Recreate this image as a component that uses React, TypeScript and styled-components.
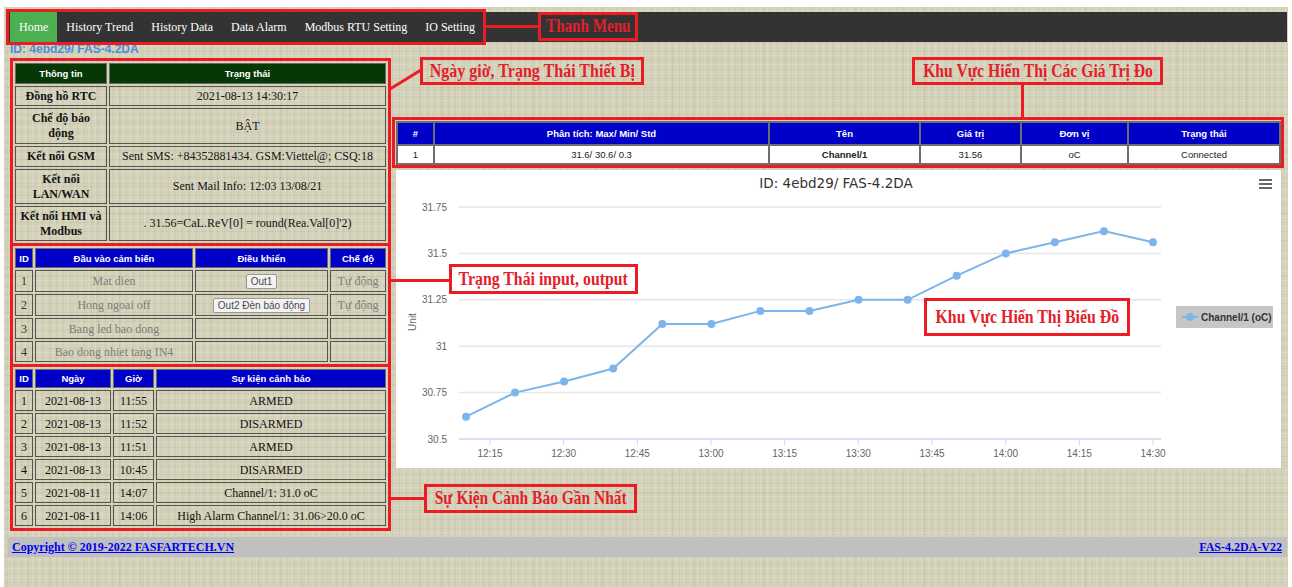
import React from 'react'
import styled, { createGlobalStyle, css } from 'styled-components'

const RED = '#ec1c24'

const GlobalStyle = createGlobalStyle`
  html, body {
    margin: 0;
    padding: 0;
    background: #fff;
  }
  body {
    font-family: "Liberation Serif", "Times New Roman", serif;
  }
`

const INFO_ROWS: [string, string, number][] = [
  ['Đồng hồ RTC', '2021-08-13 14:30:17', 20],
  ['Chế độ báo động', 'BẬT', 36],
  ['Kết nối GSM', 'Sent SMS: +84352881434. GSM:Viettel@; CSQ:18', 21],
  ['Kết nối LAN/WAN', 'Sent Mail Info: 12:03 13/08/21', 35],
  ['Kết nối HMI và Modbus', ". 31.56=CaL.ReV[0] = round(Rea.Val[0]'2)", 35],
]

const IO_ROWS = [
  { id: 1, name: 'Mat dien', out: 'Out1', mode: 'Tự động', h: 22 },
  { id: 2, name: 'Hong ngoai off', out: 'Out2 Đèn báo động', mode: 'Tự động', h: 22 },
  { id: 3, name: 'Bang led bao dong', h: 21 },
  { id: 4, name: 'Bao dong nhiet tang IN4', h: 21 },
]

const EVENTS = [
  ['2021-08-13', '11:55', 'ARMED'],
  ['2021-08-13', '11:52', 'DISARMED'],
  ['2021-08-13', '11:51', 'ARMED'],
  ['2021-08-13', '10:45', 'DISARMED'],
  ['2021-08-11', '14:07', 'Channel/1: 31.0 oC'],
  ['2021-08-11', '14:06', 'High Alarm Channel/1: 31.06>20.0 oC'],
]

const MENU = ['Home', 'History Trend', 'History Data', 'Data Alarm', 'Modbus RTU Setting', 'IO Setting']

const SERIES = [30.62, 30.75, 30.81, 30.88, 31.12, 31.12, 31.19, 31.19, 31.25, 31.25, 31.38, 31.5, 31.56, 31.62, 31.56]
const Y_TICKS = [31.75, 31.5, 31.25, 31, 30.75, 30.5]
const X_TICKS = ['12:15', '12:30', '12:45', '13:00', '13:15', '13:30', '13:45', '14:00', '14:15', '14:30']

const PLOT = { left: 63, right: 765, top: 37, bottom: 269 }
const yOf = (v: number) => PLOT.bottom - (v - 30.5) * ((PLOT.bottom - PLOT.top) / 1.25)
const xOf = (i: number) => 70 + i * (687 / 14)
const tickX = (k: number) => 94 + k * (663 / 9)

export default function App() {
  return (
    <Root>
      <GlobalStyle />
      <Page>
        <Nav>
          {MENU.map((item, i) => (
            <NavItem key={item} $active={i === 0}>
              {item}
            </NavItem>
          ))}
        </Nav>
        <DeviceId>ID: 4ebd29/ FAS-4.2DA</DeviceId>

        <Main>
          <LeftCol>
            <Marked>
              <GridTable>
                <colgroup>
                  <Col $w={92} />
                  <col />
                </colgroup>
                <thead>
                  <Row $h={21}>
                    <HeadCell $tone="green">Thông tin</HeadCell>
                    <HeadCell $tone="green">Trạng thái</HeadCell>
                  </Row>
                </thead>
                <tbody>
                  {INFO_ROWS.map(([label, value, h]) => (
                    <Row key={label} $h={h}>
                      <InfoCell $bold>{label}</InfoCell>
                      <InfoCell>{value}</InfoCell>
                    </Row>
                  ))}
                </tbody>
              </GridTable>
            </Marked>

            <Marked $joined>
              <GridTable>
                <colgroup>
                  <Col $w={18} />
                  <Col $w={158} />
                  <Col $w={133} />
                  <col />
                </colgroup>
                <thead>
                  <Row $h={20}>
                    <HeadCell $tone="blue">ID</HeadCell>
                    <HeadCell $tone="blue">Đầu vào cảm biến</HeadCell>
                    <HeadCell $tone="blue">Điều khiển</HeadCell>
                    <HeadCell $tone="blue">Chế độ</HeadCell>
                  </Row>
                </thead>
                <tbody>
                  {IO_ROWS.map((row) => (
                    <Row key={row.id} $h={row.h}>
                      <IoCell $dark>{row.id}</IoCell>
                      <IoCell>{row.name}</IoCell>
                      <IoCell>{row.out && <ActionButton type="button">{row.out}</ActionButton>}</IoCell>
                      <IoCell>{row.mode}</IoCell>
                    </Row>
                  ))}
                </tbody>
              </GridTable>
            </Marked>

            <Marked $joined>
              <GridTable>
                <colgroup>
                  <Col $w={18} />
                  <Col $w={76} />
                  <Col $w={41} />
                  <col />
                </colgroup>
                <thead>
                  <Row $h={19}>
                    <HeadCell $tone="blue">ID</HeadCell>
                    <HeadCell $tone="blue">Ngày</HeadCell>
                    <HeadCell $tone="blue">Giờ</HeadCell>
                    <HeadCell $tone="blue">Sự kiện cảnh báo</HeadCell>
                  </Row>
                </thead>
                <tbody>
                  {EVENTS.map(([day, time, text], i) => (
                    <Row key={i} $h={21}>
                      <EventCell>{i + 1}</EventCell>
                      <EventCell>{day}</EventCell>
                      <EventCell>{time}</EventCell>
                      <EventCell>{text}</EventCell>
                    </Row>
                  ))}
                </tbody>
              </GridTable>
            </Marked>
          </LeftCol>

          <RightCol>
            <Marked $flush>
              <MeasureTable>
                <colgroup>
                  <Col $w={37} />
                  <Col $w={335} />
                  <Col $w={151} />
                  <Col $w={101} />
                  <Col $w={107} />
                  <col />
                </colgroup>
                <thead>
                  <Row $h={23}>
                    <MeasureHead>#</MeasureHead>
                    <MeasureHead>Phân tích: Max/ Min/ Std</MeasureHead>
                    <MeasureHead>Tên</MeasureHead>
                    <MeasureHead>Giá trị</MeasureHead>
                    <MeasureHead>Đơn vị</MeasureHead>
                    <MeasureHead>Trạng thái</MeasureHead>
                  </Row>
                </thead>
                <tbody>
                  <Row $h={19}>
                    <MeasureCell>1</MeasureCell>
                    <MeasureCell>31.6/ 30.6/ 0.3</MeasureCell>
                    <MeasureCell $bold>Channel/1</MeasureCell>
                    <MeasureCell>31.56</MeasureCell>
                    <MeasureCell>oC</MeasureCell>
                    <MeasureCell>Connected</MeasureCell>
                  </Row>
                </tbody>
              </MeasureTable>
            </Marked>

            <ChartCard>
              <TrendChart />
            </ChartCard>
          </RightCol>
        </Main>

        <Footer>
          <FooterLink href="#">Copyright © 2019-2022 FASFARTECH.VN</FooterLink>
          <FooterLink href="#">FAS-4.2DA-V22</FooterLink>
        </Footer>
      </Page>

      {/* annotation frames and callouts */}
      <Frame $x={6} $y={9} $w={480} $h={36} />
      <Leaders width={1292} height={587}>
        <line x1={485} y1={26.5} x2={538} y2={26.5} />
        <line x1={390} y1={89} x2={421} y2={70} />
        <line x1={1022.5} y1={84} x2={1022.5} y2={118} />
        <line x1={390} y1={280.5} x2={449} y2={280.5} />
        <line x1={390} y1={498.5} x2={424} y2={498.5} />
      </Leaders>
      <Callout $x={538} $y={12} $w={100} $h={29}>
        <CalloutText $squeeze={0.84}>Thanh Menu</CalloutText>
      </Callout>
      <Callout $x={420} $y={57} $w={224} $h={28}>
        <CalloutText $squeeze={0.89}>Ngày giờ, Trạng Thái Thiết Bị</CalloutText>
      </Callout>
      <Callout $x={912} $y={57} $w={251} $h={28}>
        <CalloutText $squeeze={0.87}>Khu Vực Hiển Thị Các Giá Trị Đo</CalloutText>
      </Callout>
      <Callout $x={449} $y={264} $w={189} $h={30} $fill="#fff">
        <CalloutText $squeeze={0.88}>Trạng Thái input, output</CalloutText>
      </Callout>
      <Callout $x={924} $y={298} $w={206} $h={38} $fill="#fff">
        <CalloutText $squeeze={0.88}>Khu Vực Hiển Thị Biểu Đồ</CalloutText>
      </Callout>
      <Callout $x={424} $y={484} $w={213} $h={29}>
        <CalloutText $squeeze={0.86}>Sự Kiện Cảnh Báo Gần Nhất</CalloutText>
      </Callout>
    </Root>
  )
}

function TrendChart() {
  const line = SERIES.map((v, i) => `${i ? 'L' : 'M'}${xOf(i).toFixed(1)} ${yOf(v).toFixed(1)}`).join(' ')
  return (
    <ChartSvg width={885} height={298} viewBox="0 0 885 298">
      <text x={440} y={18} textAnchor="middle" className="title">
        ID: 4ebd29/ FAS-4.2DA
      </text>
      <g stroke="#666" strokeWidth={2}>
        <line x1={863} y1={10} x2={876} y2={10} />
        <line x1={863} y1={14} x2={876} y2={14} />
        <line x1={863} y1={18} x2={876} y2={18} />
      </g>

      {Y_TICKS.map((v) => (
        <g key={v}>
          <line
            x1={PLOT.left}
            x2={PLOT.right}
            y1={yOf(v)}
            y2={yOf(v)}
            stroke={v === 30.5 ? '#ccd6eb' : '#e6e6e6'}
            strokeWidth={1.5}
          />
          <text x={51} y={yOf(v) + 3.5} textAnchor="end" className="axis">
            {v}
          </text>
        </g>
      ))}
      <text transform="translate(20 152) rotate(-90)" textAnchor="middle" className="axis">
        Unit
      </text>

      {X_TICKS.map((t, k) => (
        <g key={t}>
          <line x1={tickX(k)} x2={tickX(k)} y1={PLOT.bottom} y2={PLOT.bottom + 6} stroke="#ccd6eb" />
          <text x={tickX(k)} y={287} textAnchor="middle" className="axis">
            {t}
          </text>
        </g>
      ))}

      <path d={line} fill="none" stroke="#7cb5ec" strokeWidth={2} />
      {SERIES.map((v, i) => (
        <circle key={i} cx={xOf(i)} cy={yOf(v)} r={4} fill="#7cb5ec" />
      ))}

      <rect x={780} y={136} width={97} height={22} fill="#c6c6c6" />
      <line x1={786} x2={802} y1={147} y2={147} stroke="#7cb5ec" strokeWidth={2} />
      <circle cx={794} cy={147} r={4} fill="#7cb5ec" />
      <text x={805} y={151} className="legend">
        Channel/1 (oC)
      </text>
    </ChartSvg>
  )
}

// woven canvas look of the page background
const canvasTexture = css`
  background-color: #d5d2ba;
  background-image: repeating-linear-gradient(
      90deg,
      rgba(255, 255, 255, 0.12) 0 1px,
      transparent 1px 3px,
      rgba(0, 0, 0, 0.035) 3px 4px,
      transparent 4px 7px
    ),
    repeating-linear-gradient(
      0deg,
      rgba(255, 255, 255, 0.1) 0 1px,
      transparent 1px 4px,
      rgba(0, 0, 0, 0.04) 4px 5px,
      transparent 5px 9px
    ),
    repeating-linear-gradient(90deg, rgba(0, 0, 0, 0.018) 0 2px, transparent 2px 23px),
    repeating-linear-gradient(0deg, rgba(0, 0, 0, 0.018) 0 2px, transparent 2px 31px);
`

const Root = styled.div`
  position: relative;
  width: 1292px;
  height: 587px;
  overflow: hidden;
`

const Page = styled.div`
  ${canvasTexture};
  margin: 7px 4px 0 4px;
  height: 580px;
  padding: 5px 1px 0 4px;
  box-sizing: border-box;
`

const Nav = styled.nav`
  display: flex;
  height: 30px;
  padding-left: 2px;
  background: #333;
`

const NavItem = styled.a<{ $active?: boolean }>`
  padding: 0 9px;
  line-height: 30px;
  font-size: 12px;
  color: #fff;
  background: ${({ $active }) => ($active ? '#4caf50' : 'transparent')};
`

const DeviceId = styled.div`
  height: 14px;
  margin-left: 2px;
  font: bold 12px/14px "Liberation Sans", Arial, sans-serif;
  color: #4a8fd8;
`

const Main = styled.div`
  display: flex;
  align-items: flex-start;
  margin-top: 2px;
`

const LeftCol = styled.div`
  width: 381px;
  margin-left: 2px;
  display: flex;
  flex-direction: column;
`

const RightCol = styled.div`
  width: 892px;
  margin-left: 1px;
  padding-top: 59px;
`

const Marked = styled.div<{ $joined?: boolean; $flush?: boolean }>`
  border: 3px solid ${RED};
  border-top-width: ${({ $joined }) => ($joined ? 0 : 3)}px;
  padding: ${({ $flush }) => ($flush ? '1px 0 0 1px' : '0')};
`

const Col = styled.col<{ $w: number }>`
  width: ${({ $w }) => $w}px;
`

const Row = styled.tr<{ $h: number }>`
  height: ${({ $h }) => $h}px;
`

const GridTable = styled.table`
  width: 100%;
  table-layout: fixed;
  border-collapse: separate;
  border-spacing: 2px;
`

const HeadCell = styled.th<{ $tone: 'green' | 'blue' }>`
  background: ${({ $tone }) => ($tone === 'green' ? '#063806' : '#0000c8')};
  color: #fff;
  border: 1px solid #6a6a6a;
  padding: 0 2px;
  font: bold 9.5px "Liberation Sans", Arial, sans-serif;
  text-align: center;
  white-space: nowrap;
`

const bodyCell = css`
  border: 1px solid #55554f;
  text-align: center;
  font-size: 12px;
  padding: 1px 3px;
`

const InfoCell = styled.td<{ $bold?: boolean }>`
  ${bodyCell};
  line-height: 15px;
  color: #141414;
  font-weight: ${({ $bold }) => ($bold ? 'bold' : 'normal')};
`

const IoCell = styled.td<{ $dark?: boolean }>`
  ${bodyCell};
  padding: 0 1px;
  line-height: 16px;
  white-space: nowrap;
  color: ${({ $dark }) => ($dark ? '#333' : '#7d7d7a')};
`

const EventCell = styled.td`
  ${bodyCell};
  padding: 0 1px;
  line-height: 16px;
  white-space: nowrap;
  color: #111;
`

const ActionButton = styled.button`
  height: 15px;
  padding: 0 4px;
  border: 1px solid #9a9a9a;
  border-radius: 2px;
  background: #f3f3f3;
  color: #4a4a4a;
  font: 10px/13px "Liberation Sans", Arial, sans-serif;
  vertical-align: middle;
`

const MeasureTable = styled.table`
  width: 885px;
  table-layout: fixed;
  border-collapse: collapse;
  font-family: "Liberation Sans", Arial, sans-serif;
`

const MeasureHead = styled.th`
  padding: 0;
  background: #0000c8;
  color: #fff;
  border: 2px solid #6e6e6e;
  font-size: 9.5px;
  font-weight: bold;
`

const MeasureCell = styled.td<{ $bold?: boolean }>`
  padding: 0;
  background: #fff;
  color: #222;
  border: 2px solid #6e6e6e;
  text-align: center;
  font-size: 9.5px;
  font-weight: ${({ $bold }) => ($bold ? 'bold' : 'normal')};
`

const ChartCard = styled.div`
  width: 885px;
  height: 298px;
  margin: 2px 0 0 4px;
  background: #fff;
`

const ChartSvg = styled.svg`
  display: block;
  font-family: "Liberation Sans", Arial, sans-serif;

  .title {
    font: 13.5px "DejaVu Sans", Verdana, sans-serif;
    fill: #333;
  }
  .axis {
    font-size: 10px;
    fill: #666;
  }
  .legend {
    font-size: 10px;
    font-weight: bold;
    fill: #333;
  }
`

const Footer = styled.footer`
  display: flex;
  align-items: center;
  justify-content: space-between;
  height: 20px;
  margin-top: 6px;
  padding: 0 5px 0 4px;
  background: #c0c0c0;
`

const FooterLink = styled.a`
  color: #0000ee;
  font-size: 12px;
  font-weight: bold;
  text-decoration: underline;
`

const Frame = styled.div<{ $x: number; $y: number; $w: number; $h: number }>`
  position: absolute;
  left: ${({ $x }) => $x}px;
  top: ${({ $y }) => $y}px;
  width: ${({ $w }) => $w}px;
  height: ${({ $h }) => $h}px;
  box-sizing: border-box;
  border: 3px solid ${RED};
`

const Leaders = styled.svg`
  position: absolute;
  left: 0;
  top: 0;
  pointer-events: none;
  stroke: ${RED};
  stroke-width: 3;
`

const Callout = styled(Frame)<{ $fill?: string }>`
  display: flex;
  align-items: center;
  justify-content: center;
  background: ${({ $fill }) => $fill ?? 'transparent'};
`

const CalloutText = styled.span<{ $squeeze: number }>`
  display: inline-block;
  white-space: nowrap;
  transform: scaleX(${({ $squeeze }) => $squeeze});
  color: #e3202a;
  font-size: 18px;
  font-weight: bold;
`
